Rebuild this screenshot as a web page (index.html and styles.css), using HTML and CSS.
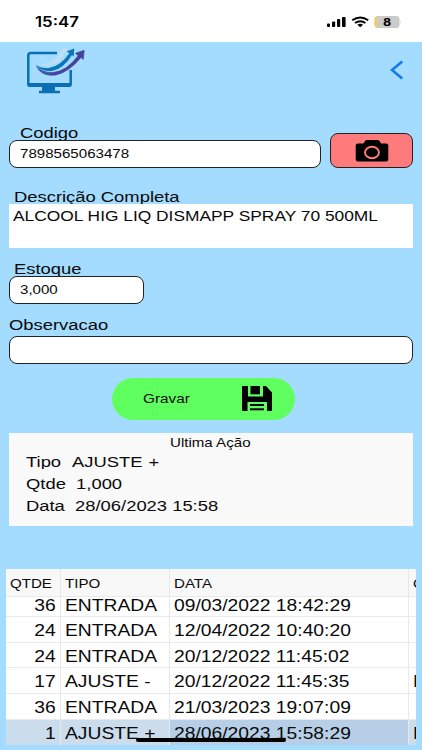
FILE: index.html
```
<!DOCTYPE html>
<html lang="pt-BR">
<head>
  <meta charset="UTF-8">
  <meta name="viewport" content="width=device-width, initial-scale=1.0">
  <title>Estoque</title>
  <link rel="stylesheet" href="styles.css">
</head>
<body>
  <div class="status-bar">
    <span class="wide time">15:47</span>
    <svg class="status-icons" width="80" height="16" viewBox="0 0 80 16">
      <rect x="1" y="9.5" width="3" height="3.5" rx="1"/>
      <rect x="6" y="7.5" width="3.2" height="5.5" rx="1"/>
      <rect x="11" y="5" width="3.2" height="8" rx="1"/>
      <rect x="16" y="3" width="3.6" height="10" rx="1"/>
      <g fill="none" stroke="#000" stroke-width="2">
        <path d="M26.2 6.3Q34.2 0.6 42.2 6.3"/>
        <path d="M29 9Q34.2 5.3 39.4 9"/>
      </g>
      <path d="M31.3 10.8Q34.2 8.8 37.1 10.8L34.2 13.2Z"/>
      <rect x="48.5" y="2" width="25" height="12" rx="3.5" fill="#cbcbcb"/>
      <path d="M51 2.2V13.8Q48.5 13.2 48.5 10.5V5.5Q48.5 2.8 51 2.2Z" fill="#f4cf4a"/>
      <path d="M74.5 6.3Q76.1 8 74.5 9.7Z" fill="#cbcbcb"/>
      <text x="51" y="11.7" transform="scale(1.2 1)" font-size="10.5" font-weight="700" text-anchor="middle">8</text>
    </svg>
  </div>

  <div class="header">
    <svg class="logo" width="62" height="48" viewBox="0 0 62 48">
      <path d="M32 6H6Q3.3 6 3.3 8.5V37Q3.3 38.7 6 38.7H43Q45.7 38.7 45.7 37V23" fill="none" stroke="#0b6fb5" stroke-width="2.5"/>
      <path d="M2.5 36H46.5V38Q46.5 40 43.5 40H5.5Q2.5 40 2.5 38Z" fill="#0b6fb5"/>
      <path d="M17 39H30V43.8H35V46.3H14V43.8H17Z" fill="#0b6fb5"/>
      <path d="M13 17Q29 19 37.5 1.5L43 .5Q34 24 13 17Z" fill="#bcdff3"/>
      <path d="M11 16.5Q17 24.5 27 22.5Q38 20 45.5 7.5L49 9.5Q40 25 28 27.5Q16 29 11 16.5Z" fill="#a3dcfe"/>
      <path d="M11 17.5Q17 22.5 25.5 20.5Q36 18.5 44.5 6L41.5 4.5L49.3 1.5L48.7 9.8L47 8Q38 22.5 27 24Q16 25 11 17.5Z" fill="#0b75b7"/>
      <path d="M11.5 19.5Q18 26 28 25.5Q42 24 53 8.8L50.5 6.2L59.2 3.3L58.3 12.5L56 10.5Q44 25 31 28Q17 30 11.5 19.5Z" fill="#43429c" stroke="#43429c" stroke-width=".6"/>
      <path d="M11 18Q16 26.5 27 26.5Q17 28.5 11 18Z" fill="#1580bd"/>
    </svg>
    <svg class="back" width="14" height="20" viewBox="0 0 14 20">
      <path d="M12.2 1.6L2 10L12.2 18.4" fill="none" stroke="#1678ee" stroke-width="2.6"/>
    </svg>
  </div>

  <div class="form">
    <div class="code-row">
      <div class="code-field">
        <div class="label indent-big"><span class="wide">Codigo</span></div>
        <div class="input"><span class="wide">7898565063478</span></div>
      </div>
      <div class="camera-btn">
        <svg width="34" height="24" viewBox="0 0 34 24">
          <path d="M3 4.5H8.5L10 2Q10.5 .9 12 .9H22.5Q24 .9 24.5 2L26 4.500H31Q33.3 4.500 33.3 6.500V20.500Q33.3 22.500 31 22.500H3Q.7 22.500 .7 20.500V6.500Q.7 4.500 3 4.500Z"/>
          <ellipse cx="17" cy="13.500" rx="7" ry="5.8" fill="none" stroke="#ff7b7b" stroke-width="1.9"/>
        </svg>
      </div>
    </div>

    <div class="label indent desc-label"><span class="wide">Descrição Completa</span></div>
    <div class="description"><span class="wide">ALCOOL HIG LIQ DISMAPP SPRAY 70 500ML</span></div>

    <div class="label indent stock-label"><span class="wide">Estoque</span></div>
    <div class="input stock"><span class="wide">3,000</span></div>

    <div class="label obs-label"><span class="wide">Observacao</span></div>
    <div class="input"></div>

    <div class="save-btn">
      <span class="wide">Gravar</span>
      <svg width="30" height="25" viewBox="0 0 30 25">
        <path d="M1 0H6V10.5H21V0H24L30 6.5V24Q30 25 29 25H25V16H5.5V25H1Q0 25 0 24V1Q0 0 1 0Z"/>
        <rect x="8.5" width="9.5" height="8.3"/>
        <rect x="8" y="18" width="14" height="2"/>
        <rect x="8" y="22.3" width="14" height="2"/>
      </svg>
    </div>

    <div class="last-action">
      <div class="title"><span class="wide">Ultima Ação</span></div>
      <div class="line clipped"><span class="wide">Tipo&nbsp; AJUSTE +</span></div>
      <div class="line"><span class="wide">Qtde&nbsp; 1,000</span></div>
      <div class="line"><span class="wide">Data&nbsp; 28/06/2023 15:58</span></div>
    </div>
  </div>

  <div class="grid">
    <div class="row head">
      <div><span class="wide">QTDE</span></div>
      <div><span class="wide">TIPO</span></div>
      <div><span class="wide">DATA</span></div>
      <div><span class="wide">OBS</span></div>
    </div>
    <div class="row first">
      <div class="qty"><span class="wide">36</span></div>
      <div><span class="wide">ENTRADA</span></div>
      <div><span class="wide">09/03/2022 18:42:29</span></div>
      <div></div>
    </div>
    <div class="row">
      <div class="qty"><span class="wide">24</span></div>
      <div><span class="wide">ENTRADA</span></div>
      <div><span class="wide">12/04/2022 10:40:20</span></div>
      <div></div>
    </div>
    <div class="row">
      <div class="qty"><span class="wide">24</span></div>
      <div><span class="wide">ENTRADA</span></div>
      <div><span class="wide">20/12/2022 11:45:02</span></div>
      <div></div>
    </div>
    <div class="row">
      <div class="qty"><span class="wide">17</span></div>
      <div><span class="wide">AJUSTE -</span></div>
      <div><span class="wide">20/12/2022 11:45:35</span></div>
      <div><span class="wide">E</span></div>
    </div>
    <div class="row">
      <div class="qty"><span class="wide">36</span></div>
      <div><span class="wide">ENTRADA</span></div>
      <div><span class="wide">21/03/2023 19:07:09</span></div>
      <div></div>
    </div>
    <div class="row selected">
      <div class="qty"><span class="wide">1</span></div>
      <div><span class="wide">AJUSTE +</span></div>
      <div class="current"><span class="wide">28/06/2023 15:58:29</span></div>
      <div><span class="wide">E</span></div>
    </div>
  </div>
  <div class="home-indicator"></div>
</body>
</html>
```
FILE: styles.css
```
* {
  box-sizing: border-box;
}
body {
  margin: 0;
  width: 422px;
  height: 750px;
  overflow: hidden;
  position: relative;
  background: #a3dcfe;
  color: #0a0a0a;
  font-family: "Liberation Sans", Arial, sans-serif;
  font-size: 15.1px;
}
.wide {
  display: inline-block;
  white-space: nowrap;
  transform: scaleX(1.218);
  transform-origin: 0 50%;
}
.status-bar {
  height: 42px;
  background: #fff;
  display: flex;
  justify-content: space-between;
  padding: 14px 16px 0 35px;
}
.time {
  font-family: Inter, sans-serif;
  font-weight: 600;
  font-size: 13.8px;
  line-height: 17px;
  color: #000;
}
.status-icons {
  font-family: Inter, sans-serif;
}
.header {
  height: 82px;
  display: flex;
  justify-content: space-between;
  padding: 5px 18px 0 25px;
}
.back {
  margin-top: 13px;
}
.form {
  padding: 0 9px;
}
.label {
  height: 16px;
  line-height: 17px;
  overflow: hidden;
}
.indent {
  padding-left: 5px;
}
.indent-big {
  padding-left: 10.5px;
}
.input {
  height: 28px;
  border: 1px solid #222;
  border-radius: 8px;
  background: #fff;
  padding-left: 10.3px;
  font-size: 12.4px;
  line-height: 27px;
}
.code-row {
  display: flex;
  align-items: flex-end;
  gap: 9px;
  height: 44px;
}
.code-field {
  width: 312px;
}
.camera-btn {
  width: 83px;
  height: 35px;
  border: 1px solid #222;
  border-radius: 8px;
  background: #ff7b7b;
  display: flex;
  align-items: center;
  justify-content: center;
}
.desc-label {
  margin-top: 20px;
}
.description {
  height: 44px;
  background: #fff;
  padding-left: 4.3px;
  font-size: 14.25px;
  line-height: 25px;
}
.stock-label {
  margin-top: 12.4px;
}
.stock {
  width: 135px;
}
.obs-label {
  height: 18px;
  margin: 12px 0 1.5px;
}
.save-btn {
  width: 183px;
  height: 42px;
  margin: 14px 0 0 103px;
  padding: 0 23px 0 31px;
  border-radius: 21px;
  background: #60ff60;
  display: flex;
  align-items: center;
  justify-content: space-between;
  font-size: 12.6px;
}
.last-action {
  height: 93px;
  margin-top: 13.5px;
  background: #f9f9f9;
  padding-left: 17px;
}
.last-action .title {
  height: 19px;
  padding-left: 144px;
  font-size: 12.4px;
  line-height: 21px;
}
.last-action .line {
  height: 21.5px;
  line-height: 19px;
}
.last-action .clipped {
  height: 17px;
  margin-bottom: 5px;
  overflow: hidden;
  word-spacing: .7px;
}
.grid {
  width: 410px;
  height: 176px;
  margin: 42.6px 0 0 6px;
  background: #fff;
  overflow: hidden;
  font-size: 15.84px;
}
.row {
  display: grid;
  grid-template-columns: 55px 109px 239px 7px;
  height: 25.7px;
  line-height: 28px;
  border-bottom: 1px solid #e8eaee;
}
.row > div {
  border-right: 1px solid #e6e8ee;
  padding-left: 3.5px;
  overflow: hidden;
}
.row > div:last-child {
  border-right: none;
}
.row .qty {
  text-align: right;
  padding: 0 4px 0 0;
}
.qty .wide {
  transform-origin: 100% 50%;
}
.head {
  height: 28px;
  line-height: 31px;
  font-size: 12.4px;
  background: #f8f8f8;
}
.first {
  height: 20px;
  line-height: 17px;
}
.selected {
  background: #cbdcec;
  border-bottom: none;
}
.current {
  background: #b7cfe6;
}
.home-indicator {
  position: absolute;
  left: 136px;
  top: 738px;
  width: 150px;
  height: 4px;
  border-radius: 2px;
  background: #000;
}
```
